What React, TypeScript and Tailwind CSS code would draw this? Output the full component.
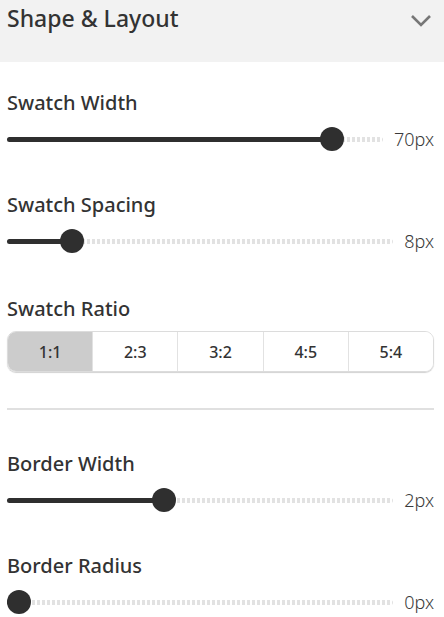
import React from 'react';

const font = { fontFamily: '"Noto Sans", "Open Sans", sans-serif' };

interface SliderProps {
  label: string;
  value: string;
  fraction: number;
}

const Slider: React.FC<SliderProps> = ({ label, value, fraction }) => {
  const pos = `calc((100% - 24px) * ${fraction} + 12px)`;
  return (
    <div className="flex flex-col">
      <div className="text-[20px] font-medium text-[#333] leading-[26px]">{label}</div>
      <div className="flex items-center gap-[11px] mt-[10px] h-[26px]">
        <div className="relative flex-1 h-[24px]">
          {/* unfilled, dotted */}
          <div className="absolute left-0 right-0 top-[10px] h-[5px] rounded-full bg-[repeating-linear-gradient(90deg,#e2e2e2_0_3px,transparent_3px_5px)]" />
          {/* filled */}
          <div className="absolute left-0 top-[10px] h-[5px] rounded-full bg-[#2f2f2f]" style={{ width: pos }} />
          {/* thumb */}
          <div
            className="absolute top-0 w-[24px] h-[24px] -ml-[12px] rounded-full bg-[#2f2f2f]"
            style={{ left: pos }}
          />
        </div>
        <div className="text-[18px] font-light text-[#3a3a3a] leading-none">{value}</div>
      </div>
    </div>
  );
};

const ratios = ['1:1', '2:3', '3:2', '4:5', '5:4'];

export default function App() {
  return (
    <div className="w-[444px] min-h-[617px] bg-white" style={font}>
      {/* Header */}
      <div className="h-[62px] bg-[#f2f2f2] flex items-start justify-between pl-[7px] pr-[10px] pt-[3px]">
        <h2 className="text-[23px] font-medium text-[#333] leading-[30px]">Shape &amp; Layout</h2>
        <svg className="mt-[11px] mr-[2px]" width="22" height="14" viewBox="0 0 22 14" fill="none">
          <path d="M2 2 L11 11 L20 2" stroke="#777" strokeWidth="2.6" />
        </svg>
      </div>

      <div className="pl-[7px] pr-[10px] pt-[28px] flex flex-col">
        <Slider label="Swatch Width" value="70px" fraction={0.89} />

        <div className="mt-[40px]">
          <Slider label="Swatch Spacing" value="8px" fraction={0.147} />
        </div>

        <div className="mt-[42px]">
          <div className="text-[20px] font-medium text-[#333] leading-[26px]">Swatch Ratio</div>
          <div className="mt-[9px] flex h-[41px] rounded-[9px] border border-[#dcdcdc] overflow-hidden shadow-[0_1px_1px_rgba(0,0,0,0.18)]">
            {ratios.map((r, i) => (
              <div
                key={r}
                className={
                  i === 0
                    ? 'flex-1 flex items-center justify-center text-[16px] font-medium text-[#333] bg-[#cccccc]'
                    : 'flex-1 flex items-center justify-center text-[16px] font-medium text-[#333] bg-white border-l border-[#e2e2e2]'
                }
              >
                {r}
              </div>
            ))}
          </div>
        </div>

        <div className="mt-[36px] h-[2px] bg-[#e0e0e0]" />

        <div className="mt-[41px]">
          <Slider label="Border Width" value="2px" fraction={0.4} />
        </div>

        <div className="mt-[40px]">
          <Slider label="Border Radius" value="0px" fraction={0} />
        </div>
      </div>
    </div>
  );
}
